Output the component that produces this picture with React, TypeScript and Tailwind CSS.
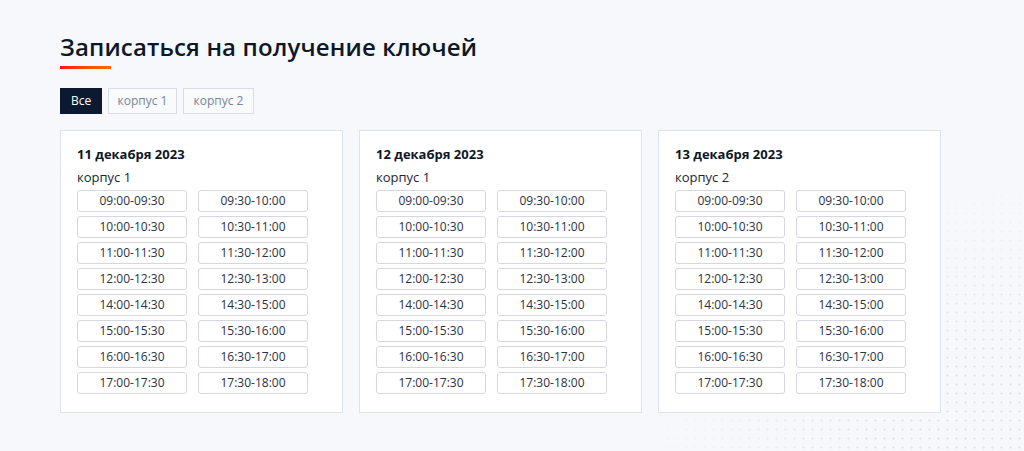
import React, { useState } from 'react';

const slots = [
  '09:00-09:30', '09:30-10:00',
  '10:00-10:30', '10:30-11:00',
  '11:00-11:30', '11:30-12:00',
  '12:00-12:30', '12:30-13:00',
  '14:00-14:30', '14:30-15:00',
  '15:00-15:30', '15:30-16:00',
  '16:00-16:30', '16:30-17:00',
  '17:00-17:30', '17:30-18:00',
];

const days = [
  { date: '11 декабря 2023', building: 'корпус 1' },
  { date: '12 декабря 2023', building: 'корпус 1' },
  { date: '13 декабря 2023', building: 'корпус 2' },
];

const tabs = [
  { label: 'Все', width: 'w-[42px]' },
  { label: 'корпус 1', width: 'w-[69px]' },
  { label: 'корпус 2', width: 'w-[71px]' },
];

const App: React.FC = () => {
  const [active, setActive] = useState('Все');

  const visible = days.filter(d => active === 'Все' || d.building === active);

  return (
    <div className="relative min-h-[451px] overflow-hidden bg-[#f6f8fb] font-['Open_Sans',sans-serif] text-[#101828]">
      {/* faint dotted texture in the corner */}
      <div className="pointer-events-none absolute bottom-0 right-0 h-[260px] w-[360px] bg-[radial-gradient(#e3e8ef_1.2px,transparent_1.3px)] bg-[length:9px_9px] [mask-image:radial-gradient(ellipse_at_bottom_right,black_30%,transparent_75%)]" />

      <div className="relative px-[60px] pt-[31px]">
        <h1 className="text-[24px] font-semibold leading-[32px] tracking-[0.15px] text-[#0e1726]">
          Записаться на получение ключей
        </h1>
        <div className="mt-[3px] h-[3px] w-[51px] bg-gradient-to-r from-[#ff0a0a] to-[#ff6a00]" />

        <div className="mt-[19px] flex gap-[6px]">
          {tabs.map(t => (
            <button
              key={t.label}
              onClick={() => setActive(t.label)}
              className={
                t.label === active
                  ? `h-[26px] ${t.width} border border-[#0b1a30] bg-[#0b1a30] text-[12px] text-white`
                  : `h-[26px] ${t.width} border border-[#d9dee6] bg-[#f8fafc] text-[12px] text-[#7b8595]`
              }
            >
              {t.label}
            </button>
          ))}
        </div>

        <div className="mt-[16px] flex gap-[16px]">
          {visible.map(d => (
            <div key={d.date} className="w-[283px] border border-[#dde3ec] bg-white px-[16px] pb-[18px] pt-[14px]">
              <div className="text-[13px] font-bold leading-[18px] text-[#0e1726]">{d.date}</div>
              <div className="mt-[5px] text-[13px] leading-[18px] text-[#1d2433]">{d.building}</div>
              <div className="mt-[4px] grid w-[231px] grid-cols-2 gap-x-[11px] gap-y-[4px]">
                {slots.map(s => (
                  <button
                    key={s}
                    className="h-[22px] rounded-[3px] border border-[#d6d6e2] bg-white text-[12px] leading-[20px] text-[#2b3145]"
                  >
                    {s}
                  </button>
                ))}
              </div>
            </div>
          ))}
        </div>
      </div>
    </div>
  );
};

export default App;
